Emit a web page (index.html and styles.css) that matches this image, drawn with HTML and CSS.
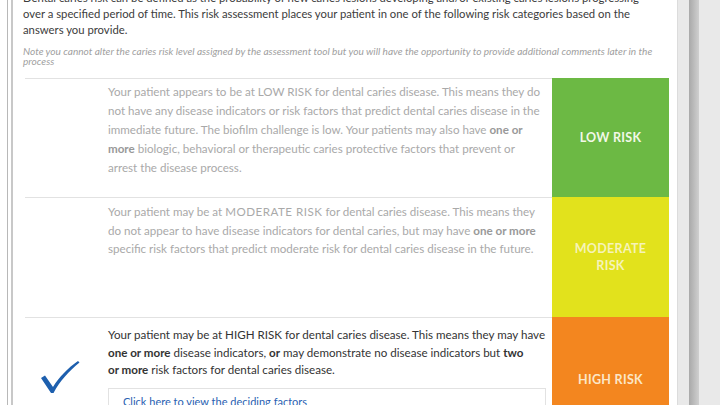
FILE: index.html
```html
<!DOCTYPE html>
<html>
<head>
<meta charset="utf-8">
<link rel="stylesheet" href="styles.css">
</head>
<body>
<div class="page">
  <div class="gutter"><div class="line1"></div><div class="line2"></div></div>
  <div class="panel">
    <p class="intro">Dental caries risk can be defined as the probability of new caries lesions developing and/or existing caries lesions progressing over a specified period of time. This risk assessment places your patient in one of the following risk categories based on the answers you provide.</p>
    <p class="note">Note you cannot alter the caries risk level assigned by the assessment tool but you will have the opportunity to provide additional comments later in the process</p>
    <div class="table">
      <div class="row row-low">
        <div class="check"></div>
        <div class="desc">Your patient appears to be at LOW RISK for dental caries disease. This means they do not have any disease indicators or risk factors that predict dental caries disease in the immediate future. The biofilm challenge is low. Your patients may also have <b>one or more</b> biologic, behavioral or therapeutic caries protective factors that prevent or arrest the disease process.</div>
        <div class="level low">LOW RISK</div>
      </div>
      <div class="row row-mod">
        <div class="check"></div>
        <div class="desc">Your patient may be at <span class="caps">MODERATE RISK</span> for dental caries disease. This means they do not appear to have disease indicators for dental caries, but may have <b>one or more</b> specific risk factors that predict moderate risk for dental caries disease in the future.</div>
        <div class="level mod">MODERATE<br>RISK</div>
      </div>
      <div class="row row-high">
        <div class="check">
          <svg class="tick" viewBox="0 0 40 32" width="40" height="32">
            <path d="M1 17 L5 14.5 L13 26 C19 16 28 7 38 0 L39.5 1.5 C29 10 20 20 13.5 32 L11 32 Z" fill="#1d5fae"/>
          </svg>
        </div>
        <div class="desc">Your patient may be at HIGH RISK for dental caries disease. This means they may have <b>one or more</b> disease indicators, <b>or</b> may demonstrate no disease indicators but <b>two</b><br><b>or more</b> risk factors for dental caries disease.
          <div class="factors"><a href="#">Click here to view the deciding factors</a></div>
        </div>
        <div class="level high">HIGH RISK</div>
      </div>
    </div>
  </div>
  <div class="edge"><div class="shadow"></div></div>
</div>
</body>
</html>
```
FILE: styles.css
```css
html, body {
  margin: 0;
  padding: 0;
  background: #fff;
  overflow: hidden;
}
.page {
  display: flex;
  width: 720px;
  height: 405px;
  overflow: hidden;
  font-family: "Lato", "Open Sans", sans-serif;
}
.gutter {
  width: 14px;
  display: flex;
  flex-shrink: 0;
}
.line1 {
  width: 7px;
  border-right: 1px solid #b8b8b8;
}
.line2 {
  width: 3px;
  border-right: 2px solid #c8c8c8;
}
.panel {
  width: 664px;
  flex-shrink: 0;
  border-right: 1px solid #dcdcdc;
  padding: 0 8px 0 9px;
  box-sizing: border-box;
}
.intro {
  margin: -10px 0 0 0;
  width: 622px;
  font-size: 11.3px;
  line-height: 16px;
  color: #3c3c3c;
}
.note {
  margin: 9px 0 0 0;
  width: 640px;
  font-size: 10.1px;
  line-height: 9.5px;
  font-style: italic;
  color: #a0a0a0;
}
.table {
  margin: 12px 0 0 2px;
}
.row {
  display: grid;
  grid-template-columns: 83px 1fr 117px;
}
.check, .desc {
  border-top: 1px solid #e2e2e2;
}
.row-low { height: 119px; }
.row-mod { height: 120px; }
.row-high { height: 124px; }
.desc {
  font-size: 11.6px;
  color: #a9a9a9;
  padding-right: 6px;
}
.caps { letter-spacing: 0.5px; }
.row-low .desc { padding-top: 3px; line-height: 19px; }
.row-mod .desc { padding-top: 5px; line-height: 18.5px; }
.row-high .desc { padding-top: 8px; line-height: 17.5px; color: #333; }
.desc b { font-weight: 700; }
.row-low .desc b, .row-mod .desc b { color: #999; }
.level {
  display: flex;
  align-items: center;
  justify-content: center;
  text-align: center;
  font-weight: 700;
  font-size: 12.5px;
  line-height: 17px;
  letter-spacing: 0.3px;
}
.low { background: #6cb944; color: #f2f8e8; }
.mod { background: #e2e21c; color: #f6f3b8; }
.high { background: #f3861f; color: #fbe7c8; }
.check {
  display: flex;
  align-items: flex-start;
  padding: 43px 0 0 15px;
  box-sizing: border-box;
}
.row-low .check, .row-mod .check { padding: 0; }
.factors {
  margin-top: 9px;
  border: 1px solid #e2e2e2;
  padding: 5px 14px;
  line-height: 16px;
  font-size: 11px;
}
.factors a {
  color: #2a5fb2;
  text-decoration: none;
}
.edge {
  flex: 1;
  display: flex;
  background: #e9e9e9;
  padding-left: 11px;
}
.shadow {
  width: 10px;
  background: linear-gradient(to right, #a9a9a9, #cfcfcf);
}
```
